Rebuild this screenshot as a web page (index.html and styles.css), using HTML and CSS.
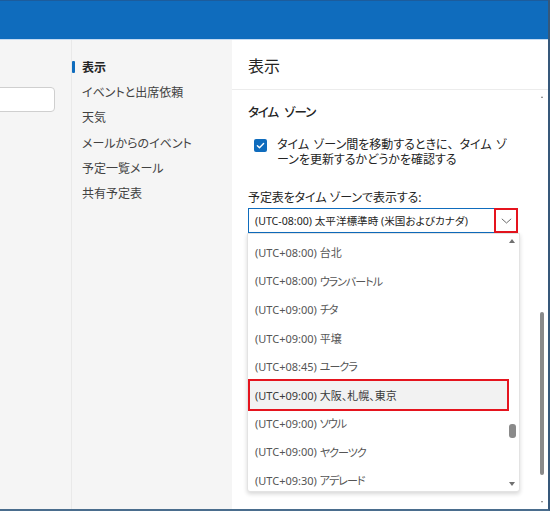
FILE: index.html
```html
<!DOCTYPE html>
<html lang="ja">
<head>
<meta charset="utf-8">
<link rel="stylesheet" href="styles.css">
</head>
<body>
<div class="window">
  <div class="topbar"></div>
  <div class="main">
    <div class="left">
      <div class="search"></div>
    </div>
    <nav class="nav">
      <div class="nav-item active">表示</div>
      <div class="nav-item">イベントと出席依頼</div>
      <div class="nav-item">天気</div>
      <div class="nav-item">メールからのイベント</div>
      <div class="nav-item">予定一覧メール</div>
      <div class="nav-item">共有予定表</div>
    </nav>
    <section class="content">
      <div class="header"><h1 class="title">表示</h1></div>
      <div class="body">
        <h2 class="section">タイム ゾーン</h2>
        <div class="check-row">
          <span class="checkbox">
            <svg width="13" height="13" viewBox="0 0 13 13"><path d="M3.4 6.7 L5.5 8.7 L9.6 4.5" fill="none" stroke="#fff" stroke-width="1.4" stroke-linecap="round" stroke-linejoin="round"/></svg>
          </span>
          <span class="check-label"><span class="line">タイム ゾーン間を移動するときに<span class="fw">、</span>タイム ゾ</span><span class="line">ーンを更新するかどうかを確認する</span></span>
        </div>
        <div class="field-label">予定表をタイム ゾーンで表示する:</div>
        <div class="combo">
          <span class="combo-text">(UTC-08:00) 太平洋標準時 (米国およびカナダ)</span>
          <span class="combo-btn">
            <svg width="11" height="6" viewBox="0 0 11 6"><path d="M0.8 0.8 L5.5 5 L10.2 0.8" fill="none" stroke="#6b6b6b" stroke-width="1"/></svg>
          </span>
        </div>
      </div>
      <div class="dropdown">
        <div class="options">
          <div class="option">(UTC+08:00) 台北</div>
          <div class="option">(UTC+08:00) <span class="kana">ウランバートル</span></div>
          <div class="option">(UTC+09:00) <span class="kana">チタ</span></div>
          <div class="option">(UTC+09:00) 平壌</div>
          <div class="option">(UTC+08:45) <span class="kana">ユークラ</span></div>
          <div class="option selected">(UTC+09:00) 大阪、札幌、東京</div>
          <div class="option">(UTC+09:00) <span class="kana">ソウル</span></div>
          <div class="option">(UTC+09:00) <span class="kana">ヤクーツク</span></div>
          <div class="option">(UTC+09:30) <span class="kana">アデレード</span></div>
        </div>
        <div class="list-scroll">
          <span class="arrow up"></span>
          <span class="list-thumb"></span>
          <span class="arrow down"></span>
        </div>
      </div>
      <div class="page-scroll">
        <span class="mini up"></span>
        <span class="page-thumb"></span>
        <span class="mini down"></span>
      </div>
    </section>
  </div>
</div>
</body>
</html>
```

FILE: styles.css
```css
* { box-sizing: border-box; }
html, body { margin: 0; padding: 0; }
body {
  width: 550px;
  height: 511px;
  overflow: hidden;
  font-family: "Noto Sans", "Noto Sans CJK JP", sans-serif;
  font-feature-settings: "palt";
  color: #242424;
  background: #fff;
}
.fw { font-feature-settings: normal; }
.window {
  width: 550px;
  height: 511px;
  display: flex;
  flex-direction: column;
  border-right: 2px solid #36587a;
  border-bottom: 2px solid #4a6d8d;
}
.topbar {
  height: 40px;
  flex: none;
  background: #0f6cbd;
  border-top: 1px solid #1c5c9c;
  border-bottom: 1px solid #c4dbf2;
}
.main {
  flex: 1;
  display: flex;
  min-height: 0;
}
.left {
  width: 72px;
  flex: none;
  background: #f5f5f5;
  border-right: 1px solid #e9e9e9;
  overflow: hidden;
  padding-top: 47px;
}
.search {
  width: 66px;
  height: 25px;
  margin-left: -11px;
  background: #fff;
  border: 1px solid #cfcfcf;
  border-radius: 4px;
}
.nav {
  width: 160px;
  flex: none;
  background: #f5f5f5;
  padding-top: 14px;
}
.nav-item {
  position: relative;
  height: 25.3px;
  display: flex;
  align-items: center;
  padding-left: 10px;
  font-size: 12px;
  color: #424242;
  white-space: nowrap;
}
.nav-item.active {
  font-weight: 700;
  color: #242424;
}
.nav-item.active::before {
  content: "";
  position: absolute;
  left: 0;
  top: 7px;
  width: 2.5px;
  height: 12px;
  background: #0f6cbd;
  border-radius: 1px;
}
.content {
  flex: 1;
  position: relative;
  background: #fff;
}
.header {
  height: 50px;
  border-bottom: 1px solid #ececec;
  display: flex;
  align-items: center;
  padding-left: 16px;
  padding-top: 2px;
}
.title {
  margin: 0;
  font-size: 16px;
  font-weight: 400;
  line-height: 20px;
}
.body {
  padding: 13px 0 0 16px;
}
.section {
  margin: 0;
  font-size: 12.5px;
  font-weight: 500;
  line-height: 20px;
  letter-spacing: -1.1px;
  word-spacing: 4px;
}
.check-row {
  display: flex;
  align-items: flex-start;
  margin-top: 15px;
  padding-left: 6px;
}
.checkbox {
  width: 13px;
  height: 13px;
  flex: none;
  background: #0f6cbd;
  border-radius: 2px;
  display: flex;
  margin-top: 1px;
}
.check-label {
  margin-left: 10px;
  display: flex;
  flex-direction: column;
  font-family: "Liberation Sans", "Noto Sans CJK JP", sans-serif;
  font-size: 12px;
  white-space: nowrap;
  color: #242424;
  word-spacing: 1px;
}
.check-label .line {
  display: block;
  height: 15px;
  line-height: 15px;
}
.field-label {
  margin-top: 22px;
  font-size: 12px;
  line-height: 16px;
  letter-spacing: -0.1px;
}
.combo {
  margin-top: 2px;
  width: 270px;
  height: 25px;
  border: 1px solid #0f6cbd;
  display: flex;
  align-items: center;
  justify-content: space-between;
  padding-left: 6px;
  position: relative;
}
.combo-text {
  font-size: 10.6px;
  white-space: nowrap;
}
.combo-btn {
  width: 24px;
  height: 25px;
  margin-right: -1px;
  margin-top: -2px;
  border: 2px solid #e5141e;
  display: flex;
  align-items: center;
  justify-content: center;
  position: relative;
  top: 1px;
}
.dropdown {
  position: absolute;
  left: 15px;
  top: 193px;
  width: 273px;
  height: 259px;
  background: #fff;
  border: 1px solid #e3e3e3;
  border-radius: 0 0 3px 3px;
  box-shadow: 0 2px 4px rgba(0, 0, 0, 0.16);
  overflow: hidden;
}
.options {
  padding-top: 4px;
  width: 261px;
}
.option {
  height: 28.5px;
  display: flex;
  align-items: center;
  margin: 0 2px;
  padding-left: 5px;
  font-size: 11px;
  color: #555;
  white-space: pre;
}
.kana { letter-spacing: -1px; }
.option.selected {
  background: #f2f2f2;
  color: #3a3a3a;
  outline: 2px solid #e5141e;
}
.list-scroll {
  position: absolute;
  right: 2px;
  top: 0;
  width: 8px;
  height: 100%;
}
.arrow {
  position: absolute;
  left: 0;
  width: 0;
  height: 0;
  border-left: 3.5px solid transparent;
  border-right: 3.5px solid transparent;
}
.arrow.up { top: 5px; border-bottom: 4px solid #707070; }
.arrow.down { top: 248px; border-top: 4px solid #707070; }
.list-thumb {
  position: absolute;
  left: 0;
  top: 190px;
  width: 6.5px;
  height: 14px;
  border-radius: 3px;
  background: #8a8a8a;
}
.page-scroll {
  position: absolute;
  right: 3px;
  top: 0;
  width: 5px;
  height: 100%;
}
.page-thumb {
  position: absolute;
  left: 0;
  top: 272px;
  width: 4px;
  height: 163px;
  border-radius: 2px;
  background: #8a8a8a;
}
.mini {
  position: absolute;
  left: 0.5px;
  width: 0;
  height: 0;
  border-left: 1.5px solid transparent;
  border-right: 1.5px solid transparent;
}
.mini.up { top: 56px; border-bottom: 2px solid #777; }
.mini.down { top: 461px; border-top: 2px solid #777; }
```
